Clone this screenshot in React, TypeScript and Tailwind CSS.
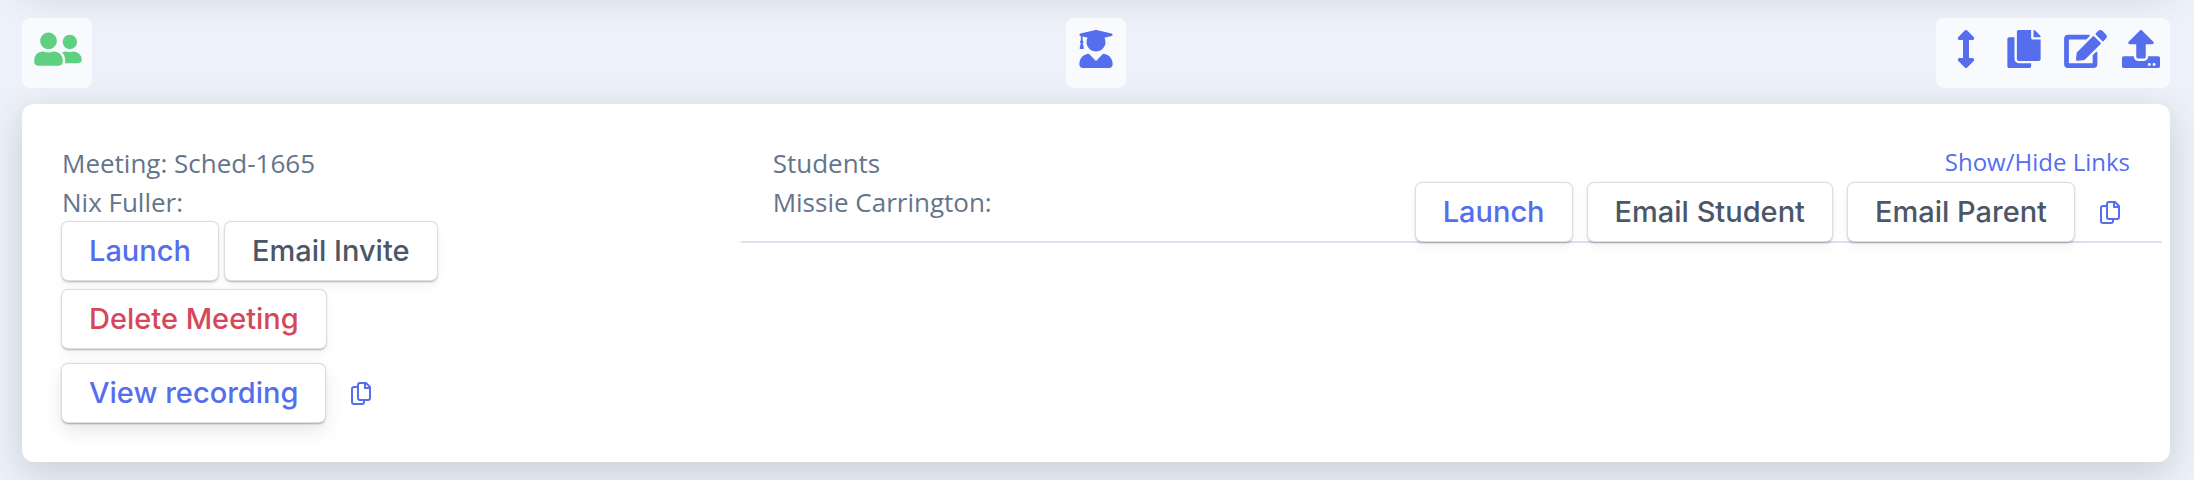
import React from "react";
import { FaArrowsAltV, FaCopy, FaEdit, FaUpload, FaUserFriends, FaUserGraduate } from "react-icons/fa";

type Tone = "primary" | "dark" | "danger";

const tones: Record<Tone, string> = {
  primary: "text-[#556eee]",
  dark: "text-[#4b5768]",
  danger: "text-[#d6475a]",
};

interface ActionButtonProps {
  tone: Tone;
  raised?: boolean;
  children: React.ReactNode;
}

function ActionButton({ tone, raised, children }: ActionButtonProps) {
  const shadow = raised
    ? "shadow-[0_0_0_1px_#dcdde3,0_0_2px_1px_rgba(0,0,0,0.08),0_2px_2px_rgba(0,0,0,0.3),0_8px_20px_rgba(0,0,0,0.1)]"
    : "shadow-[0_0_0_1px_#dcdde3,0_0_2px_1px_rgba(0,0,0,0.08),0_2px_2px_rgba(0,0,0,0.25),0_6px_12px_rgba(0,0,0,0.05)]";
  return (
    <button
      type="button"
      className={`h-[58px] whitespace-nowrap rounded-md bg-white px-[27px] font-[Inter,sans-serif] text-[29px] font-medium leading-[58px] ${shadow} ${tones[tone]}`}
    >
      {children}
    </button>
  );
}

function CopyButton({ label }: { label: string }) {
  return (
    <button type="button" aria-label={label} className="ml-[10px] text-[#556eee]">
      <svg viewBox="0 0 20 23" className="h-[23px] w-5" fill="none" stroke="currentColor" strokeWidth="2" strokeLinejoin="round">
        <path d="M8.5 1h6.500l4 4v11a2 2 0 0 1-2 2H9a2 2 0 0 1-2-2V3a2 2 0 0 1 2-2z" />
        <path d="M14 1v5h5" />
        <path d="M7 5H3a2 2 0 0 0-2 2v13a2 2 0 0 0 2 2h8a2 2 0 0 0 2-2v-2" />
      </svg>
    </button>
  );
}

export default function App() {
  return (
    <div className="min-h-screen overflow-hidden bg-[#edf1f9] pl-[22px] pr-6 font-['Open_Sans',sans-serif] text-[26px] leading-[39px] text-[#64748b]">
      {/* bottom edge of the previous meeting card */}
      <div className="-mt-[118px] h-[100px] rounded-xl bg-white shadow-[0_10px_36px_rgba(55,65,75,0.2)]" />
      <header className="grid grid-cols-3 items-start pt-9">
        <div className="flex h-[70px] items-start justify-self-start rounded-lg bg-[#f9fafe] pl-3 pr-[10px] pt-3 text-[#5fd080]">
          <FaUserFriends className="h-[38px] w-12" />
        </div>
        <div className="flex h-[70px] items-start justify-self-center rounded-lg bg-[#f9fafe] px-[13px] pt-3 text-[#556eee]">
          <FaUserGraduate className="h-[38px] w-[34px]" />
        </div>
        <div className="flex h-[70px] items-start justify-self-end rounded-lg bg-[#f9fafe] pl-5 pr-[10px] pt-3 text-[#556eee]">
          <button type="button" aria-label="Move meeting" className="mr-[31px]">
            <FaArrowsAltV className="h-[38px] w-5" />
          </button>
          <button type="button" aria-label="Duplicate meeting" className="mr-[23px]">
            <FaCopy className="h-[38px] w-[34px]" />
          </button>
          <button type="button" aria-label="Edit meeting" className="mr-[15px]">
            <FaEdit className="h-[38px] w-[43px]" />
          </button>
          <button type="button" aria-label="Upload files">
            <FaUpload className="h-[38px] w-[38px]" />
          </button>
        </div>
      </header>

      <main className="mt-4 flex rounded-xl bg-white px-2 py-10 shadow-[0_10px_36px_rgba(55,65,75,0.2)]">
        <section className="w-1/3 shrink-0 pl-8">
          <p>Meeting: Sched-1665</p>
          <p>Nix Fuller:</p>
          <div className="flex gap-[7px]">
            <ActionButton tone="primary">Launch</ActionButton>
            <ActionButton tone="dark">Email Invite</ActionButton>
          </div>
          <div className="flex pt-[10px]">
            <ActionButton tone="danger">Delete Meeting</ActionButton>
          </div>
          <div className="flex items-center gap-4 pt-4">
            <ActionButton tone="primary" raised>View recording</ActionButton>
            <CopyButton label="Copy recording link" />
          </div>
        </section>

        <section className="flex-1">
          <div className="flex h-[99px] items-start justify-between border-b-2 border-[#dbe2ee] pl-8">
            <div>
              <p>Students</p>
              <p>Missie Carrington:</p>
            </div>
            <div className="flex flex-col items-end">
              <a href="#links" className="mr-8 text-2xl leading-9 text-[#556eee]">
                Show/Hide Links
              </a>
              <div className="mr-[42px] flex items-center gap-4 pt-[3px]">
                <ActionButton tone="primary">Launch</ActionButton>
                <ActionButton tone="dark">Email Student</ActionButton>
                <ActionButton tone="dark">Email Parent</ActionButton>
                <CopyButton label="Copy student link" />
              </div>
            </div>
          </div>
        </section>
      </main>
    </div>
  );
}
